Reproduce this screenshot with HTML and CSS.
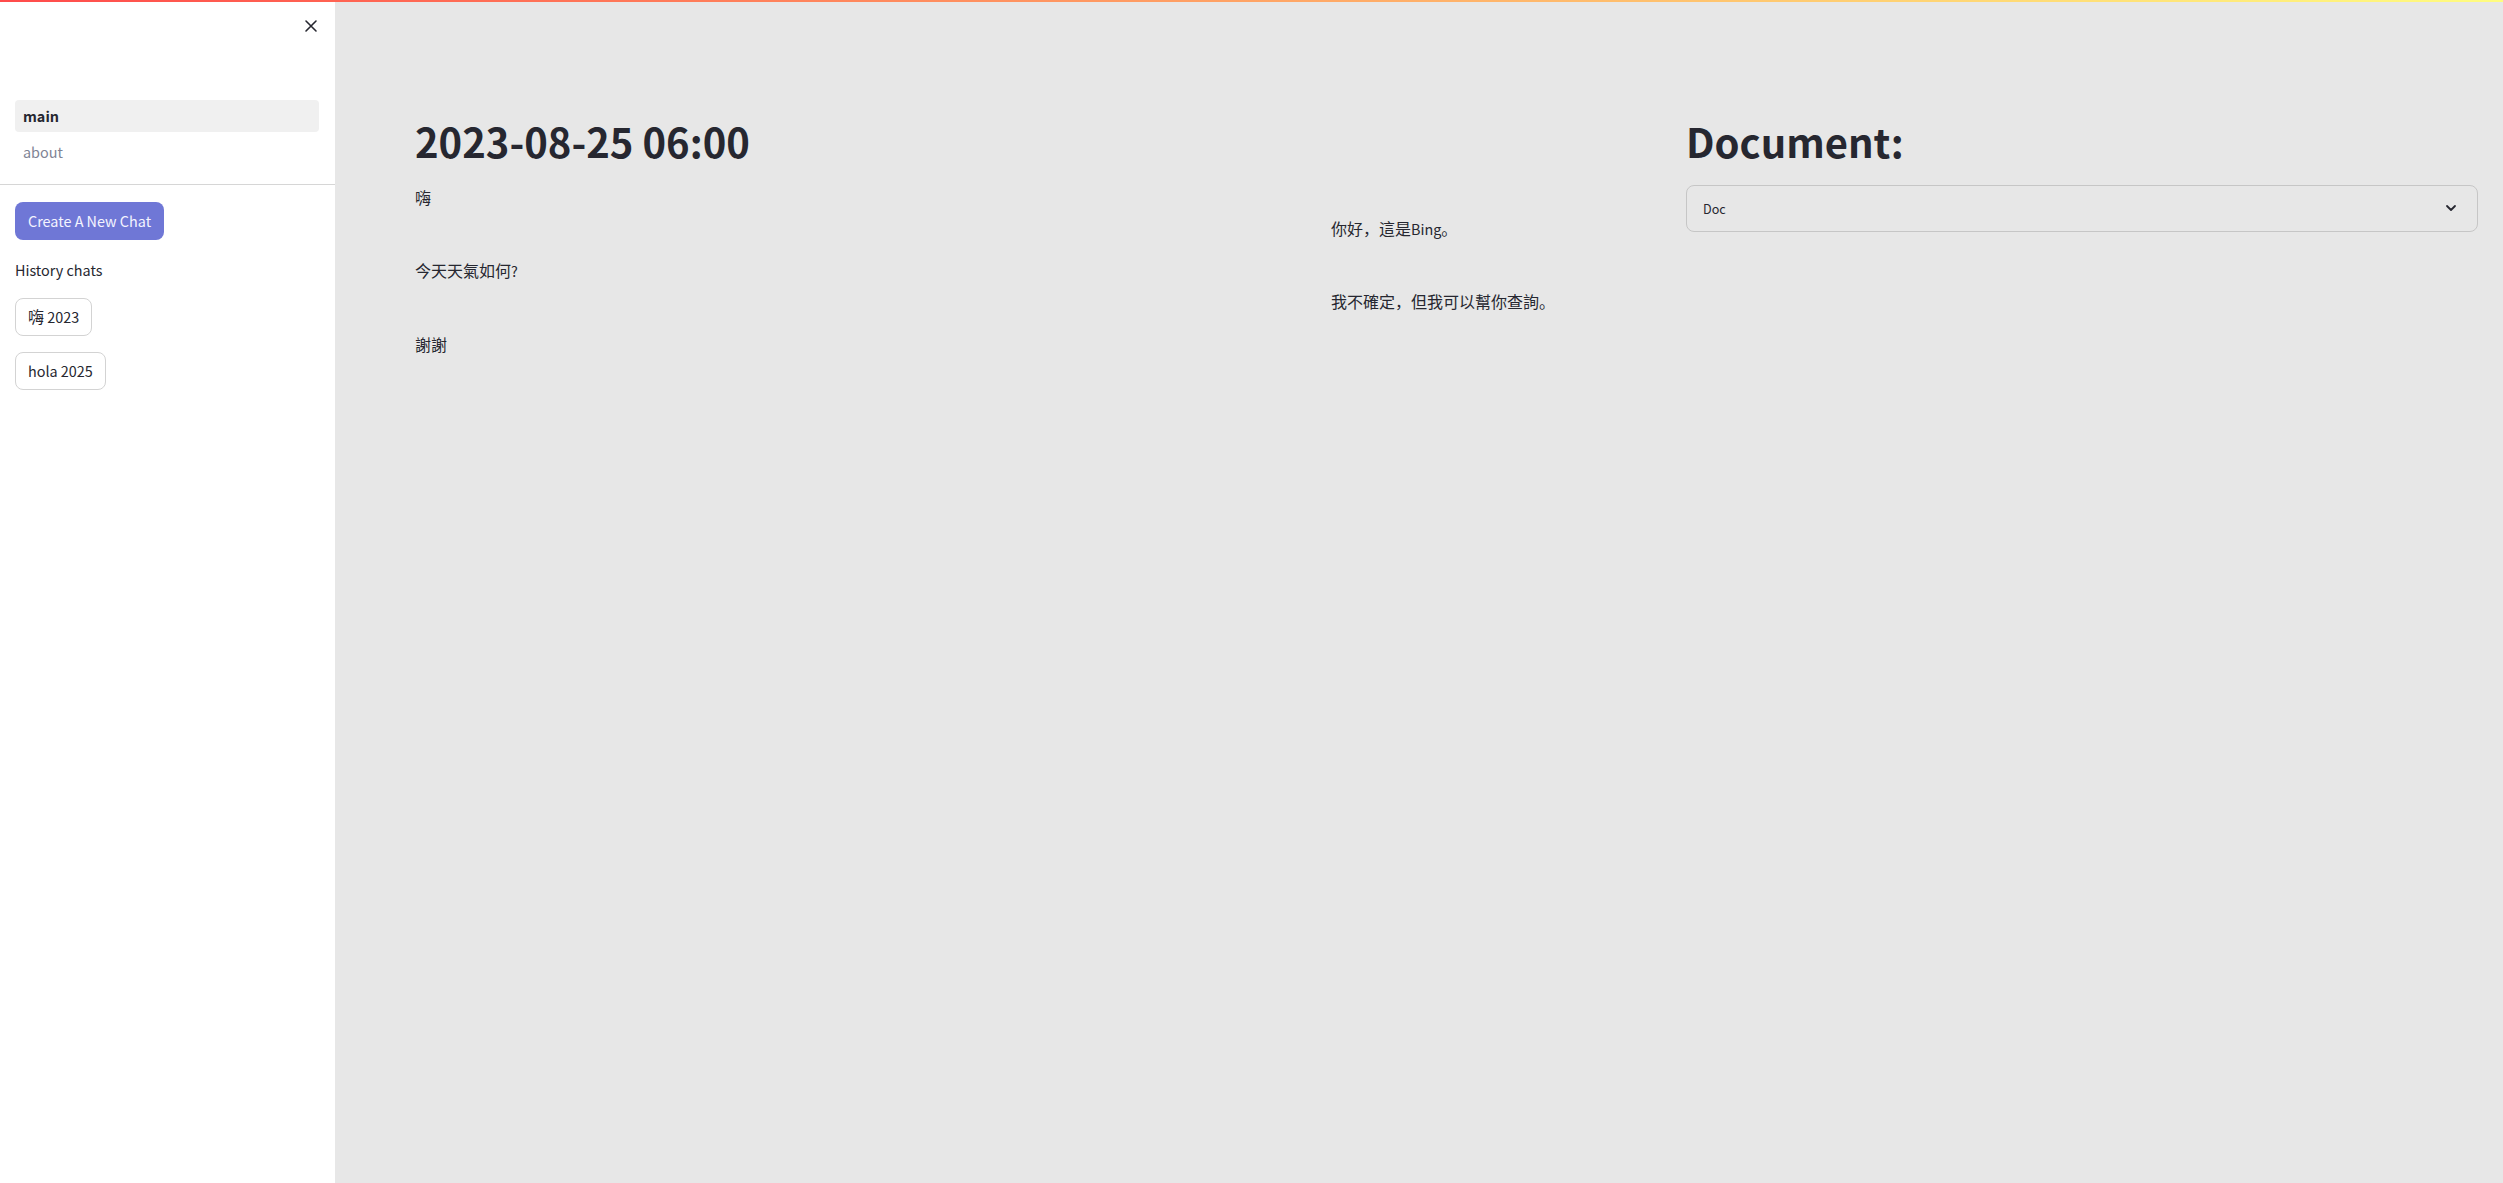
FILE: index.html
```html
<!DOCTYPE html>
<html lang="zh-Hans">
<head>
<meta charset="utf-8">
<title>Chat</title>
<link rel="stylesheet" href="styles.css">
</head>
<body>
<div class="topbar"></div>
<div class="app">
  <aside class="sidebar">
    <div class="sb-head">
      <button class="close" aria-label="Close">
        <svg width="14" height="14" viewBox="0 0 14 14"><path d="M2 2 L12 12 M12 2 L2 12" stroke="#262730" stroke-width="1.6" stroke-linecap="round"/></svg>
      </button>
    </div>
    <nav class="nav">
      <a class="nav-item active">main</a>
      <a class="nav-item">about</a>
    </nav>
    <div class="sb-body">
      <button class="btn-primary">Create A New Chat</button>
      <p class="sb-label">History chats</p>
      <button class="btn-sec">嗨<span class="lat"> 2023</span></button>
      <button class="btn-sec"><span class="lat">hola 2025</span></button>
    </div>
  </aside>
  <main class="main">
    <section class="chat-col">
      <h1 class="title">2023-08-25 06:00</h1>
      <div class="chat">
        <div class="msg-row">
          <p class="user">嗨</p>
          <p class="bot">你好，這是<span class="lat">Bing</span>。</p>
        </div>
        <div class="msg-row">
          <p class="user">今天天氣如何<span class="lat">?</span></p>
          <p class="bot">我不確定，但我可以幫你查詢。</p>
        </div>
        <div class="msg-row">
          <p class="user">謝謝</p>
          <p class="bot"></p>
        </div>
      </div>
    </section>
    <section class="doc-col">
      <h1 class="title">Document:</h1>
      <div class="select">
        <span class="select-val">Doc</span>
        <svg class="chev" width="12" height="8" viewBox="0 0 12 8"><path d="M2 2 L6 6 L10 2" fill="none" stroke="#262730" stroke-width="1.8" stroke-linecap="round" stroke-linejoin="round"/></svg>
      </div>
    </section>
  </main>
</div>
</body>
</html>
```

FILE: styles.css
```css
* { box-sizing: border-box; }
html, body { margin: 0; height: 100%; }
body {
  font-family: "Noto Sans CJK SC", "Noto Sans CJK JP", "Noto Sans", sans-serif;
  color: #262730;
  font-size: 16px;
  overflow: hidden;
}
.lat { font-size: 0.9em; }
.topbar {
  position: fixed;
  top: 0; left: 0; right: 0;
  height: 2px;
  background: linear-gradient(90deg, #ff4b4b, #fffd80);
  z-index: 10;
}
.app {
  display: flex;
  height: 100vh;
}
.sidebar {
  width: 335px;
  flex: none;
  background: #ffffff;
  display: flex;
  flex-direction: column;
}
.sb-head {
  height: 100px;
  display: flex;
  justify-content: flex-end;
  align-items: flex-start;
  padding: 17px 15px 0 0;
}
.close {
  border: none;
  background: transparent;
  padding: 2px;
  width: 18px;
  height: 18px;
  display: flex;
  align-items: center;
  justify-content: center;
}
.nav {
  display: flex;
  flex-direction: column;
  gap: 4px;
  padding: 0 16px 16px 15px;
  border-bottom: 1px solid #d6d6d6;
}
.nav-item {
  height: 32px;
  line-height: 32px;
  padding-left: 8px;
  border-radius: 4px;
  color: #808495;
  font-size: 14.4px;
}
.nav-item.active {
  background: #f0f0f0;
  color: #262730;
  font-weight: 700;
}
.sb-body {
  padding: 17px 15px;
  display: flex;
  flex-direction: column;
  align-items: flex-start;
}
.btn-primary {
  height: 38px;
  padding: 0 13px;
  border: none;
  border-radius: 8px;
  background: #6f77d6;
  color: #f4f4ff;
  font: inherit;
  font-size: 14.4px;
  line-height: 1;
}
.sb-label {
  margin: 17px 0 15px;
  line-height: 25.6px;
  font-size: 14.4px;
}
.btn-sec {
  height: 38px;
  padding: 0 12px;
  border: 1px solid #d3d3d3;
  border-radius: 8px;
  background: #ffffff;
  color: #262730;
  font: inherit;
  font-size: 16px;
  line-height: 1;
  margin-bottom: 16px;
}
.main {
  flex: 1;
  background: #e7e7e7;
  padding: 0 25px 0 80px;
  display: grid;
  grid-template-columns: 1255px 1fr;
  column-gap: 16px;
  align-items: start;
}
.title {
  margin: 115px 0 17px;
  font-size: 40px;
  line-height: 52.8px;
  font-weight: 700;
  letter-spacing: 0;
  color: #262730;
}
.chat {
  display: flex;
  flex-direction: column;
  gap: 17px;
}
.msg-row {
  display: grid;
  grid-template-columns: 900px 1fr;
  column-gap: 16px;
}
.msg-row p {
  margin: 0;
  line-height: 25.6px;
  font-size: 16px;
}
.msg-row .bot {
  margin-top: 31px;
  min-height: 25.6px;
}
.select {
  height: 47px;
  border: 1px solid #c6c6c6;
  border-radius: 8px;
  display: flex;
  align-items: center;
  justify-content: space-between;
  padding: 0 20px 0 16px;
}
.select-val {
  font-size: 12.6px;
}
.chev { display: block; }
```
